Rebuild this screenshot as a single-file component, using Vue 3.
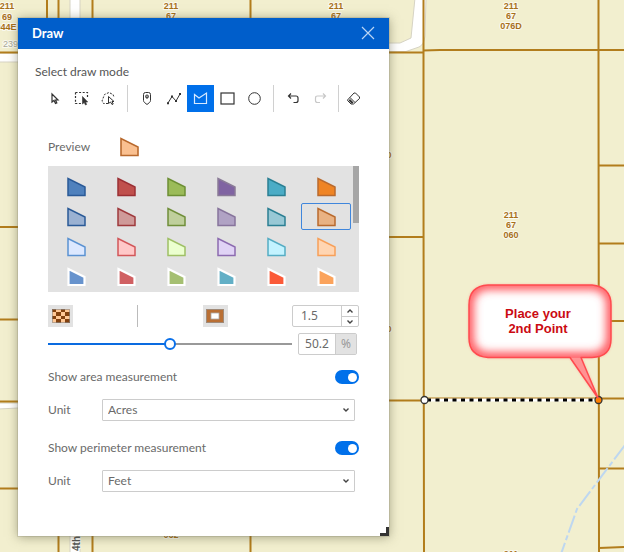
<script setup>
import { ref, computed } from 'vue'

const tools = [
  { id: 'select', label: 'Select' },
  { id: 'rect-select', label: 'Select by rectangle' },
  { id: 'lasso', label: 'Select by lasso' },
  { divider: true, id: 'd1' },
  { id: 'point', label: 'Point' },
  { id: 'line', label: 'Line' },
  { id: 'polygon', label: 'Polygon' },
  { id: 'rectangle', label: 'Rectangle' },
  { id: 'circle', label: 'Circle' },
  { divider: true, id: 'd2' },
  { id: 'undo', label: 'Undo' },
  { id: 'redo', label: 'Redo', disabled: true },
  { divider: true, id: 'd3', tight: true },
  { id: 'erase', label: 'Clear' }
]
const activeTool = ref('polygon')

const swatches = [
  ['#4f81bd', '#2a5a97'], ['#c0504d', '#9b3035'], ['#9bbb59', '#6d8f35'],
  ['#8064a2', '#8a7b97'], ['#4bacc6', '#2b7f93'], ['#ef8424', '#b96a2e'],
  ['#9ab1d2', '#2a5a97'], ['#cf9a99', '#9f3a3d'], ['#bfcf9c', '#708f3a'],
  ['#b0a2c4', '#87749c'], ['#98c8d5', '#2b7f93'], ['#e9b283', '#b96a2e'],
  ['#dce8ff', '#5b92d2'], ['#ffc8c8', '#d2575a'], ['#ebffcf', '#9fc066'],
  ['#e0d3f5', '#8c6bb0'], ['#c3f3ff', '#56adc4'], ['#ffd5b2', '#f7a05a'],
  ['#6793cd', '#ffffff'], ['#d06062', '#ffffff'], ['#a5bf72', '#ffffff'],
  ['#62afc6', '#ffffff'], ['#fb5a38', '#ffffff'], ['#fba35c', '#ffffff']
]
const selected = ref(11)

const outline = ref('1.5')
const opacity = ref(50.2)
const fill = computed(() => ({ '--fill': opacity.value + '%' }))
const showArea = ref(true)
const showPerimeter = ref(true)
const areaUnit = ref('Acres')
const perimeterUnit = ref('Feet')

function step(by) {
  outline.value = String(Math.max(0, Number(outline.value) + by))
}
</script>

<template>
  <main class="stage">
    <svg class="map" width="624" height="552" viewBox="0 0 624 552" aria-hidden="true">
      <g fill="#fff" stroke="#d6d3c4">
        <path d="M70 -2H80V560H70Z" />
        <path d="M-2 53H60V62H-2Z" />
        <path d="M-2 403H60V406L-2 409Z" />
        <path d="M380 43H400L411 38L415 -2H426L425 36Q424 45 419 47L406 51.500H380Z" />
      </g>
      <g class="parcels">
        <path d="M47 0V52M58.500 0V552M92.500 0V552M250.500 0V552M423.500 0V190L424 552M598.500 0V80L599 552" />
        <path d="M0 52.500H60M0 227H58M0 319.500H58M0 401.500H58M0 488.500H58" />
        <path d="M380 52.500H423M380 237H423M380 400.500H423M423 50.500L440 50H624M424 398.500H624" />
        <path d="M599 165.500H624M599 243.500H624M599 321H624M599 468.500H624M599 548L624 547" />
      </g>
      <path d="M625 445L577 509L561 554" fill="none" stroke="#bed7f0" stroke-width="2" stroke-dasharray="18 3 5 3" />
      <g class="labels">
        <text x="7" y="9">211</text><text x="7" y="20">69</text><text x="6" y="30">044E</text>
        <text x="171" y="9">211</text><text x="171" y="19">67</text>
        <text x="336" y="9">211</text><text x="336" y="19">67</text>
        <text x="511" y="9">211</text><text x="511" y="19">67</text><text x="511" y="29">076D</text>
        <text x="511" y="218">211</text><text x="511" y="228">67</text><text x="511" y="238">060</text>
        <text x="171" y="538">062</text><text x="511" y="557">211</text>
        <text x="384" y="158">060</text><text x="384" y="332">060</text>
      </g>
      <text class="address" x="3" y="47">239</text>
      <text class="street" transform="translate(80 551) rotate(-90)">4th</text>
    </svg>

    <svg class="map" width="624" height="552" viewBox="0 0 624 552">
      <defs>
        <filter id="soft" x="-20%" y="-20%" width="140%" height="140%"><feGaussianBlur stdDeviation="4" /></filter>
        <filter id="drop" x="-20%" y="-20%" width="140%" height="140%"><feGaussianBlur stdDeviation="1" /></filter>
        <clipPath id="bubble">
          <path d="M488 285H592Q611 287 611 305V339Q611 357 592 357.500H581L598 398L570 357.500H488Q469 356 469 338V305Q469 286 488 285Z" />
        </clipPath>
      </defs>
      <path d="M424 400H598" stroke="#fff" stroke-width="3" />
      <path d="M426 400H596" stroke="#000" stroke-width="3" stroke-dasharray="4 4.500" stroke-dashoffset="-1" />
      <circle cx="424.500" cy="400" r="3.500" fill="#fff" stroke="#333" stroke-width="1.300" />
      <circle cx="598.500" cy="400" r="3.500" fill="#ff8000" stroke="#333" stroke-width="1.300" />
      <path d="M488 285H592Q611 287 611 305V339Q611 357 592 357.500H581L598 398L570 357.500H488Q469 356 469 338V305Q469 286 488 285Z" fill="none" stroke="#ff8a80" stroke-width="2" opacity=".4" filter="url(#drop)" />
      <g clip-path="url(#bubble)">
        <path d="M460 280H620V400H460Z" fill="#fff" />
        <rect x="468" y="284" width="144" height="74" rx="20" fill="none" stroke="#ff5a60" stroke-width="12" filter="url(#soft)" />
        <path d="M570 358H581L598 398Z" fill="#ff9393" />
      </g>
      <path d="M488 285H592Q611 287 611 305V339Q611 357 592 357.500H581L598 398L570 357.500H488Q469 356 469 338V305Q469 286 488 285Z" fill="none" stroke="#ff4a4e" stroke-width="1.500" stroke-linejoin="round" />
      <text class="callout" x="538" y="318">Place your</text>
      <text class="callout" x="538" y="333">2nd Point</text>
    </svg>

    <section class="panel" aria-label="Draw">
      <header class="bar">
        <h1>Draw</h1>
        <button class="close" type="button" aria-label="Close">
          <svg width="14" height="14" viewBox="0 0 14 14"><path d="M1 1L13 13M13 1L1 13" stroke="#b9d5f5" stroke-width="1.200" /></svg>
        </button>
      </header>

      <h2 class="mode">Select draw mode</h2>
      <div class="tools" role="toolbar" aria-label="Select draw mode">
        <template v-for="t in tools" :key="t.id">
          <span v-if="t.divider" class="divider" :class="{ tight: t.tight }"></span>
          <button v-else type="button" class="tool" :class="{ active: activeTool === t.id }" :aria-label="t.label" :disabled="t.disabled" @click="activeTool = t.id">
            <svg width="17" height="17" viewBox="0 0 17 17" fill="none" stroke="currentColor">
              <path v-if="t.id === 'select'" d="M6 4V12L8 10.500L9.500 13.500L10.800 13L9.500 10H12Z" stroke-width="1.200" />
              <template v-else-if="t.id === 'rect-select'">
                <path d="M2.500 2.500H14.500V7M2.500 2.500V13.500H8" stroke-dasharray="2 1.600" stroke-width="1.200" />
                <path d="M9.500 6.500V14L11.200 12.500L12.500 15L13.600 14.500L12.600 12H14.700Z" fill="currentColor" stroke-width=".6" />
              </template>
              <template v-else-if="t.id === 'lasso'">
                <path d="M8 13.500H3.500L2 11L4.500 4.500L9 2.500L13 4.500L14 7" stroke-dasharray="2 1.400" />
                <path d="M8.500 6.500V13.500L10.500 12L12 14.500L13.200 14L12 11.500H14Z" />
              </template>
              <template v-else-if="t.id === 'point'">
                <path d="M5.500 4.500Q5.500 2.500 7.500 2.500H10.500Q12.500 2.500 12.500 4.500V10.500Q12.500 11.500 11.500 12.500L9 14.500L6.500 12.500Q5.500 11.500 5.500 10.500Z" />
                <circle cx="9" cy="6.500" r="1.500" /><path d="M9 6V8.500" />
              </template>
              <template v-else-if="t.id === 'line'">
                <path d="M3 13L7 6.500L11 11L15 4" />
                <path d="M2 12.200H4V14.200H2ZM6 5.500H8V7.500H6ZM10 10H12V12H10ZM14 3H16V5H14Z" fill="currentColor" stroke="none" />
              </template>
              <path v-else-if="t.id === 'polygon'" d="M2.500 4.500L7 8L14.500 3V13.500H2.500Z" stroke-width="1.200" />
              <rect v-else-if="t.id === 'rectangle'" x="2" y="3" width="13" height="11" stroke-width="1.200" />
              <circle v-else-if="t.id === 'circle'" cx="8.500" cy="8.500" r="5.800" />
              <path v-else-if="t.id === 'undo'" d="M7 3.500L4.500 6L7 8.500M4.500 6H12Q14 6 14 8V10.500Q14 12.500 12 12.500H9.500" stroke-width="1.200" />
              <path v-else-if="t.id === 'redo'" d="M12 3.500L14.500 6L12 8.500M14.500 6H6.500Q4.500 6 4.500 8V10.500Q4.500 12.500 6.500 12.500H9" stroke-width="1.200" />
              <template v-else>
                <path d="M3.500 10L10 3H11.500L15.500 7V8.500L9.500 14H7L3.500 10.500ZM6 7.500L11 12.500" />
                <path d="M6 9L9.500 12.500L8.500 13.500H7.500L4.500 10.500Z" fill="currentColor" stroke="none" />
              </template>
            </svg>
          </button>
        </template>
      </div>

      <div class="body">
        <div class="preview">
          <span class="caption">Preview</span>
          <svg width="20" height="20" viewBox="0 0 20 20"><path d="M2 1.500V18.500H19V10Z" fill="#fac090" stroke="#b96a2e" stroke-width="1.600" /></svg>
        </div>

        <div class="swatches">
          <div class="grid">
            <button v-for="(s, i) in swatches" :key="i" type="button" class="swatch" :class="{ selected: selected === i }" :aria-label="'Symbol ' + (i + 1)" @click="selected = i">
              <svg width="20" height="20" viewBox="0 0 20 20">
                <path v-if="i < 18" d="M2 1.500V18.500H19V10Z" :fill="s[0]" :stroke="s[1]" stroke-width="1.500" />
                <path v-else d="M2.500 2V18H18.500V10Z" :fill="s[0]" :stroke="s[1]" stroke-width="2.200" />
              </svg>
            </button>
          </div>
          <span class="scroll"></span>
        </div>

        <div class="style-row">
          <button type="button" class="chip" aria-label="Fill colour">
            <svg width="18" height="14" viewBox="0 0 18 14">
              <rect width="18" height="14" fill="#ffc896" />
              <path d="M0 0H4V3H0ZM9 0H13V3H9ZM4 3H9V7H4ZM13 3H18V7H13ZM0 7H4V10H0ZM9 7H13V10H9ZM4 10H9V14H4ZM13 10H18V14H13Z" fill="#82410f" />
              <rect x=".5" y=".5" width="17" height="13" fill="none" stroke="#888" stroke-opacity=".6" />
            </svg>
          </button>
          <span class="rule"></span>
          <button type="button" class="chip" aria-label="Outline colour">
            <svg width="18" height="14" viewBox="0 0 18 14">
              <rect x=".5" y=".5" width="17" height="13" fill="#b96f34" stroke="#a08a78" />
              <rect x="5" y="4" width="8" height="6" fill="#fff" stroke="#aaa" stroke-width=".8" />
            </svg>
          </button>
          <div class="number">
            <input v-model="outline" type="text" inputmode="decimal" aria-label="Outline width" />
            <div class="spin">
              <button type="button" aria-label="Increase" @click="step(0.5)"><svg width="8" height="6" viewBox="0 0 8 6"><path d="M1.500 4.500L4 2L6.500 4.500" /></svg></button>
              <button type="button" aria-label="Decrease" @click="step(-0.5)"><svg width="8" height="6" viewBox="0 0 8 6"><path d="M1.500 1.500L4 4L6.500 1.500" /></svg></button>
            </div>
          </div>
        </div>

        <div class="slide-row">
          <input v-model="opacity" class="slider" type="range" min="0" max="100" step="0.1" aria-label="Opacity" :style="fill" />
          <div class="percent">
            <input v-model="opacity" type="text" inputmode="decimal" aria-label="Opacity percent" />
            <span>%</span>
          </div>
        </div>

        <label class="switch-row">
          <span>Show area measurement</span>
          <input v-model="showArea" type="checkbox" class="toggle" role="switch" />
        </label>
        <div class="unit-row">
          <label for="area-unit">Unit</label>
          <select id="area-unit" v-model="areaUnit"><option>Acres</option><option>Hectares</option></select>
          <svg class="chevron" width="8" height="6" viewBox="0 0 8 6"><path d="M1.500 1.500L4 4L6.500 1.500" /></svg>
        </div>

        <label class="switch-row">
          <span>Show perimeter measurement</span>
          <input v-model="showPerimeter" type="checkbox" class="toggle" role="switch" />
        </label>
        <div class="unit-row">
          <label for="perimeter-unit">Unit</label>
          <select id="perimeter-unit" v-model="perimeterUnit"><option>Feet</option><option>Meters</option></select>
          <svg class="chevron" width="8" height="6" viewBox="0 0 8 6"><path d="M1.500 1.500L4 4L6.500 1.500" /></svg>
        </div>
      </div>
      <span class="grip"></span>
    </section>
  </main>
</template>

<style>
body { background: #f2efcf; }
</style>

<style scoped>
* { box-sizing: border-box; }
button, input, select { font: inherit; color: inherit; margin: 0; padding: 0; border: 0; background: none; border-radius: 0; }
svg { display: block; }

.stage {
  position: relative;
  min-height: 100vh;
  overflow: hidden;
  background: #f2efcf;
  font-family: Lato, "Open Sans", sans-serif;
  font-size: 12px;
  line-height: 16px;
  color: #6a6a6a;
}
.map { position: absolute; top: 0; left: 0; }
.parcels { fill: none; stroke: #b27d1c; stroke-width: 2; }
.labels text, .address, .street { font-family: "Liberation Sans", Arial, sans-serif; paint-order: stroke; stroke: #fff; stroke-width: 2px; stroke-opacity: .7; }
.labels text { font-size: 9px; font-weight: 700; fill: #a8701a; text-anchor: middle; }
.address { font-size: 9px; fill: #aaa898; }
.street { font-size: 10px; font-weight: 700; fill: #555; }
.callout { font-family: "Liberation Sans", Arial, sans-serif; font-size: 13px; font-weight: 700; fill: #cb0a12; text-anchor: middle; }

.panel {
  position: absolute;
  top: 18px;
  left: 18px;
  width: 371px;
  padding-bottom: 25px;
  background: #fff;
  box-shadow: 0 0 0 1px rgba(120, 120, 100, .2), 0 1px 10px rgba(80, 80, 50, .5);
}
.bar { display: flex; align-items: center; justify-content: space-between; height: 31px; padding: 0 14px 2px; background: #005ecb; color: #fff; }
.bar h1 { margin: 0; font-size: 13px; line-height: 16px; font-weight: 700; }
.close { display: grid; place-items: center; width: 14px; height: 14px; cursor: pointer; }
.mode { margin: 15px 17px 5px; font-size: 12px; font-weight: 400; line-height: 16px; color: #555; }

.tools { display: flex; align-items: center; padding-left: 23px; }
.tool { display: grid; place-items: center; width: 27px; height: 27px; color: #333; cursor: pointer; }
.tool.active { background: #0070ea; color: #d8eaff; }
.tool:disabled { color: #c8c8c8; }
.divider { width: 1px; height: 27px; margin: 0 5px; background: #d0d0d0; }
.divider.tight { margin-right: 0; }

.body { padding: 24px 30px 0; }
.preview { display: flex; align-items: center; height: 22px; }
.caption { width: 71px; }
.swatches { display: flex; justify-content: space-between; height: 126px; margin-top: 8px; background: #e2e2e2; overflow: hidden; }
.grid { display: grid; flex: 1; grid-template-columns: repeat(6, 1fr); grid-auto-rows: 27px; gap: 3px 0; padding: 7px 2px 0 3px; }
.swatch { display: grid; place-items: center; border: 1px solid transparent; border-radius: 2px; cursor: pointer; }
.swatch.selected { border-color: #3f86dc; }
.scroll { width: 6px; height: 57px; background: #a6a6a6; }

.style-row { display: flex; align-items: center; justify-content: space-between; margin-top: 13px; }
.chip { display: grid; place-items: center; width: 25px; height: 22px; background: #e2e2e2; cursor: pointer; }
.rule { width: 1px; height: 22px; background: #bbb; }
.number { display: flex; width: 67px; height: 22px; border: 1px solid #ccc; border-radius: 2px; }
.number input { flex: 1; min-width: 0; padding-left: 8px; }
.spin { display: grid; grid-template-rows: 1fr 1fr; width: 17px; border-left: 1px solid #ccc; }
.spin button { display: grid; place-items: center; }
.spin button + button { border-top: 1px solid #ccc; }
.spin path, .chevron path { fill: none; stroke: #444; stroke-width: 1.4; }

.number input, .percent input, .percent span { font-family: "Noto Sans", sans-serif; }
.slide-row { display: flex; align-items: center; gap: 6px; height: 22px; margin-top: 6px; padding-right: 2px; }
.slider { flex: 1; min-width: 0; height: 12px; appearance: none; cursor: pointer; }
.slider::-webkit-slider-runnable-track { height: 2px; background: linear-gradient(to right, #0a6be0 var(--fill), #999 var(--fill)); }
.slider::-webkit-slider-thumb { appearance: none; width: 12px; height: 12px; margin-top: -5px; border: 2px solid #0a70ea; border-radius: 50%; background: #fff; }
.percent { display: flex; width: 59px; height: 22px; border: 1px solid #ccc; border-radius: 2px; }
.percent input { flex: 1; min-width: 0; text-align: center; }
.percent span { width: 21px; border-left: 1px solid #ccc; background: #e2e2e2; color: #999; line-height: 20px; text-align: center; }

.switch-row { display: flex; align-items: center; justify-content: space-between; height: 16px; margin-top: 14px; }
.toggle { display: flex; justify-content: flex-end; align-items: center; width: 24px; height: 14px; padding: 0 2px; appearance: none; border-radius: 7px; background: #999; cursor: pointer; }
.toggle::before { content: ""; width: 9px; height: 9px; border-radius: 50%; background: #fff; }
.toggle:checked { background: #0070ea; }
.toggle:not(:checked) { justify-content: flex-start; }
.unit-row { display: flex; align-items: center; height: 22px; margin: 14px 4px 19px 0; }
.unit-row label { width: 54px; }
.unit-row select { flex: 1; height: 22px; padding-left: 5px; appearance: none; border: 1px solid #ccc; border-radius: 1px; background: #fff; }
.chevron { margin: 0 5px 0 -13px; pointer-events: none; }
.grip { position: absolute; right: 0; bottom: 0; width: 9px; height: 9px; border: solid #333; border-width: 0 3px 3px 0; }
</style>
